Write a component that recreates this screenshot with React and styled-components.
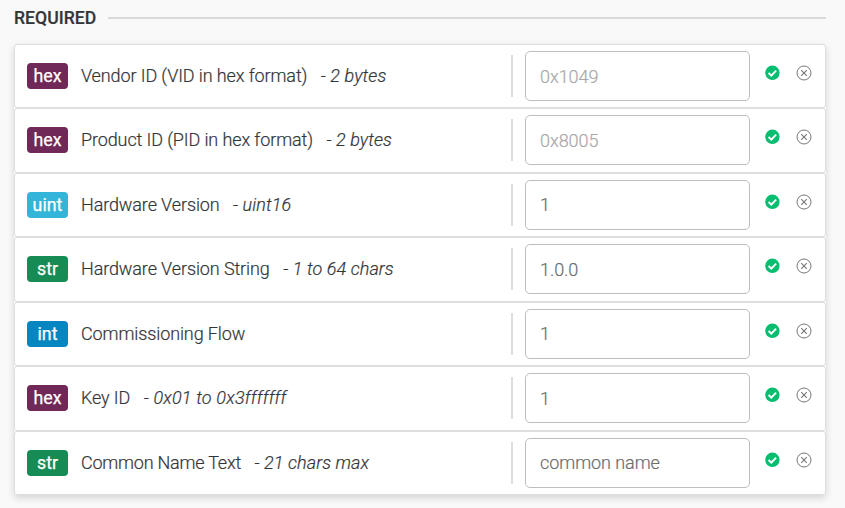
import React from "react";
import styled, { createGlobalStyle } from "styled-components";

const GlobalStyle = createGlobalStyle`
  *, *::before, *::after { box-sizing: border-box; }
  html, body { margin: 0; background: #f9f9f9; }
  body { font-family: Roboto, sans-serif; color: #333639; overflow: hidden; }
`;

const Section = styled.section`
  width: 845px;
  height: 508px;
  padding: 7px 19px 0 14px;
`;

const Heading = styled.header`
  display: flex;
  align-items: center;
  gap: 12px;
  height: 22px;
`;

const Title = styled.h2`
  margin: 0;
  width: 82px;
  white-space: nowrap;
  font-size: 17.6px;
  line-height: 22px;
  font-weight: 500;
  -webkit-text-stroke: 0.2px currentColor;
`;

const Rule = styled.div`
  flex: 1;
  height: 2px;
  background: #dadada;
`;

const List = styled.div`
  display: grid;
  grid-template-rows: repeat(7, 64.43px);
  margin-top: 15px;
  border-radius: 3px;
  box-shadow: 0 3px 7px rgba(0, 0, 0, 0.15);
`;

const Row = styled.div`
  display: flex;
  align-items: flex-start;
  border: 1px solid #dedede;
  border-radius: 3px;
  background: #fff;
  padding: 6px 13px 0 12px;
`;

const badgeColors = { hex: "#6f2858", uint: "#32b5d8", str: "#178b54", int: "#0686c0" };

const Badge = styled.span`
  width: 41px;
  height: 26px;
  margin-top: 12px;
  border-radius: 4px;
  background: ${({ $type }) => badgeColors[$type]};
  color: #fff;
  font-size: 17.8px;
  font-weight: 400;
  line-height: 26px;
  text-align: center;
  -webkit-text-stroke: 0.25px currentColor;
`;

const Label = styled.div`
  flex: 1;
  margin: 12px 0 0 13px;
  font-size: 18px;
  font-weight: 300;
  letter-spacing: ${({ $spacing }) => $spacing ?? -0.11}px;
  line-height: 26px;
  white-space: nowrap;
  -webkit-text-stroke: 0.2px currentColor;
`;

const Hint = styled.em`
  margin-left: 13.5px;
  letter-spacing: ${({ $spacing }) => $spacing ?? 0.08}px;
`;

const Divider = styled.div`
  width: 2px;
  height: 42px;
  margin: 4px 12px 0 0;
  background: #dedede;
`;

const Input = styled.input`
  width: 225px;
  height: 50px;
  padding: 0 14px;
  border: 1px solid #bdbdbd;
  border-radius: 5px;
  outline: none;
  background: #fff;
  color: #6c6c6c;
  font: 300 18px Roboto, sans-serif;
  letter-spacing: -0.06px;
  -webkit-text-stroke: 0.2px currentColor;
  &::placeholder { color: #a8a8a8; opacity: 1; }
`;

const Actions = styled.div`
  display: flex;
  align-items: center;
  gap: 16px;
  height: 16px;
  margin: 14px 0 0 15px;
  svg { display: block; }
`;

const ValidIcon = () => (
  <svg width="15" height="16" viewBox="0 0 15 16">
    <circle cx="7.4" cy="7.8" r="7.2" fill="#07bd70" />
    <path d="M3.6 8 6.3 10.6 11.1 5.6" fill="none" stroke="#fff" strokeWidth="2" />
  </svg>
);

const ClearIcon = () => (
  <svg width="16" height="16" viewBox="0 0 16 16">
    <circle cx="8" cy="8" r="7" fill="none" stroke="#777" strokeWidth="1" />
    <path d="M5.2 5.2 10.8 10.8M10.8 5.2 5.2 10.8" fill="none" stroke="#777" strokeWidth="1.1" />
  </svg>
);

const fields = [
  { type: "hex", label: "Vendor ID (VID in hex format)", hint: "- 2 bytes", placeholder: "0x1049" },
  { type: "hex", label: "Product ID (PID in hex format)", hint: "- 2 bytes", placeholder: "0x8005" },
  { type: "uint", label: "Hardware Version", hint: "- uint16", value: "1" },
  { type: "str", label: "Hardware Version String", hint: "- 1 to 64 chars", value: "1.0.0" },
  { type: "int", label: "Commissioning Flow", value: "1" },
  { type: "hex", label: "Key ID", hint: "- 0x01 to 0x3fffffff", hintSpacing: 0.18, value: "1" },
  { type: "str", label: "Common Name Text", labelSpacing: -0.22, hint: "- 21 chars max", value: "common name" },
];

export default function App() {
  return (
    <Section>
      <GlobalStyle />
      <Heading>
        <Title>REQUIRED</Title>
        <Rule />
      </Heading>
      <List>
        {fields.map((field) => (
          <Row key={field.label}>
            <Badge $type={field.type}>{field.type}</Badge>
            <Label $spacing={field.labelSpacing}>
              {field.label}
              {field.hint && <Hint $spacing={field.hintSpacing}>{field.hint}</Hint>}
            </Label>
            <Divider />
            <Input aria-label={field.label} placeholder={field.placeholder} defaultValue={field.value} />
            <Actions>
              <ValidIcon />
              <ClearIcon />
            </Actions>
          </Row>
        ))}
      </List>
    </Section>
  );
}
